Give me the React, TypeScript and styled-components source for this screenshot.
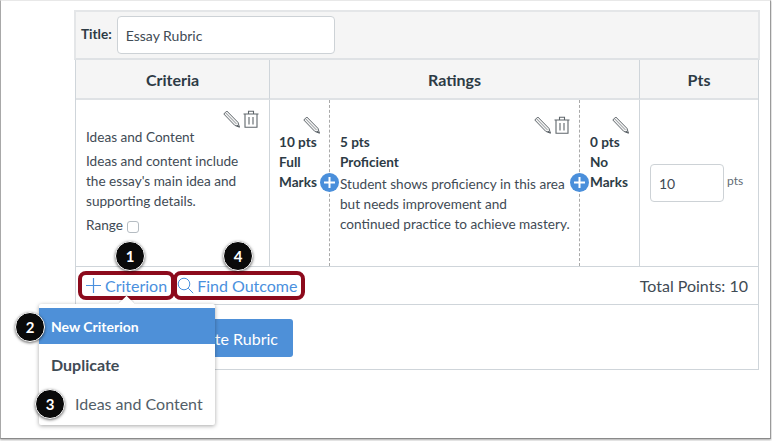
import React from "react";
import styled, { createGlobalStyle } from "styled-components";

const Global = createGlobalStyle`
  html, body { margin: 0; padding: 0; background: #fff; }
  body { font-family: Lato, "Open Sans", sans-serif; color: #2d3b45; width: 772px; height: 441px; overflow: hidden; }
`;

const Frame = styled.div`
  position: relative; box-sizing: border-box; width: 771px; height: 439px;
  border: 1px solid #d4d4d4; border-left-color: #a8a8a8; border-right-color: #9a9a9a; border-bottom: 1px solid #8a8a8a; border-top: 1px solid #e8e8e8;
  box-shadow: 0 1px 2px rgba(0,0,0,.35);
  padding: 9px 0 0 73px; background: #fff;
`;
const Rubric = styled.div`width: 686px;`;
const TitleRow = styled.div`
  box-sizing: border-box; width: 686px; height: 50px; display: flex; align-items: center; gap: 5px; padding-left: 5px;
  background: #f5f5f5; border: 2px solid #e4e6e8; border-bottom-color: #dfe2e5;
`;
const TitleLabel = styled.span`font-size: 13.6px; font-weight: 700; margin-top: -3px;`;
const TextBox = styled.div<{ $w: number; $h: number }>`
  box-sizing: border-box; width: ${p => p.$w}px; height: ${p => p.$h}px; display: flex; align-items: center; padding-left: 8px;
  background: #fff; border: 1px solid #cdd2d6; border-radius: 4px; font-size: 14px; color: #3f4b55;
`;
const Table = styled.div`
  box-sizing: border-box; width: 684px; margin-left: 1px;
  display: grid; grid-template-columns: 194px 370px 118px; border-left: 1px solid #cfd5da; border-right: 1px solid #cfd5da;
`;
const Head = styled.div<{ $last?: boolean }>`
  box-sizing: border-box; height: 40px; display: flex; align-items: center; justify-content: center;
  background: #f5f5f5; font-size: 16px; font-weight: 700; color: #2d3b45;
  border-bottom: 2px solid #dfe2e5; border-right: ${p => (p.$last ? "none" : "1px solid #cfd5da")};
`;
const CriterionCell = styled.div`
  box-sizing: border-box; height: 166px; position: relative; padding: 27px 10px 0 10px; border-right: 1px solid #cfd5da; font-size: 13.6px; line-height: 20px; color: #3f4b55;
`;
const CritTitle = styled.div`margin-bottom: 4px;`;
const RangeRow = styled.div`display: flex; align-items: center; gap: 4px; margin-top: 4px;`;
const CheckBox = styled.span`width: 10px; height: 10px; border: 1px solid #b5bcc2; border-radius: 3px; margin-top: 3px;`;
const Ratings = styled.div`
  height: 166px; box-sizing: border-box; display: grid; grid-template-columns: 60px 250px 60px; border-right: 1px solid #cfd5da;
`;
const Rating = styled.div<{ $dashed?: boolean; $pad: number }>`
  position: relative; box-sizing: border-box; padding: 32px 0 0 ${p => p.$pad}px; font-size: 13.6px; line-height: 20px;
  border-right: ${p => (p.$dashed ? "1px dashed #a9a9a9" : "none")};
`;
const Bold = styled.div`font-weight: 700; color: #2d3b45;`;
const Desc = styled.div`color: #3f4b55; white-space: nowrap; margin-top: 2px;`;
const Tools = styled.div<{ $top: number; $right: number }>`
  position: absolute; top: ${p => p.$top}px; right: ${p => p.$right}px; display: flex; gap: 3px;
`;
const AddDot = styled.span`
  position: absolute; top: 73px; right: -10px; z-index: 2; width: 19px; height: 19px; border-radius: 50%; background: #4a8fdb;
  display: flex; align-items: center; justify-content: center;
`;
const PtsCell = styled.div`
  box-sizing: border-box; height: 166px; display: flex; align-items: flex-start; gap: 3px; padding: 64px 0 0 10px; font-size: 12px; color: #5f6b75;
`;
const PtsLabel = styled.span`line-height: 34px;`;
const FooterRow = styled.div`
  box-sizing: border-box; width: 684px; height: 39px; margin-left: 1px; display: flex; align-items: center; justify-content: space-between; padding: 0 10px 0 9px;
  border: 1px solid #cfd5da; font-size: 16px;
`;
const Actions = styled.div`display: flex; align-items: center; gap: 10px;`;
const ActionLink = styled.span`display: flex; align-items: center; gap: 3px; color: #4a90de; font-size: 16px;`;
const Total = styled.span`color: #3f4b55; font-size: 16px;`;
const SubmitRow = styled.div`
  box-sizing: border-box; width: 684px; height: 65px; margin-left: 1px; padding: 14px 0 0 0; border: 1px solid #cfd5da; border-top: none;
`;
const CreateButton = styled.div`
  box-sizing: border-box; margin-left: 49px; width: 168px; height: 38px; background: #4e90d8; border-radius: 3px; color: #fff; font-size: 16px;
  display: flex; align-items: center; justify-content: flex-end; padding-right: 15px;
`;
const Highlight = styled.div<{ $x: number; $w: number }>`
  position: absolute; box-sizing: border-box; left: ${p => p.$x}px; top: 270px; width: ${p => p.$w}px; height: 29px;
  border: 4px solid #8c0a1c; border-radius: 8px;
`;
const Menu = styled.div`
  position: absolute; left: 38px; top: 303px; width: 176px; height: 121px; box-sizing: border-box; padding-top: 4px; z-index: 3;
  background: #fff; box-shadow: 0 1px 4px rgba(0,0,0,.35); border-radius: 2px;
  &::before {
    content: ""; position: absolute; left: 82px; top: -6px; width: 11px; height: 11px; background: #fff; transform: rotate(45deg);
    box-shadow: -1px -1px 1px rgba(0,0,0,.12);
  }
`;
const MenuActive = styled.div`
  position: relative; height: 36px; background: #4e90d8; color: #fff; font-size: 14px; font-weight: 700; display: flex; align-items: center; padding-left: 12px;
`;
const MenuHeader = styled.div`
  box-sizing: border-box; height: 42px; padding: 0 0 2px 12px; display: flex; align-items: center; font-size: 16px; font-weight: 700; color: #3f4b55;
`;
const MenuItem = styled.div`height: 34px; display: flex; align-items: center; padding-left: 36px; font-size: 16px; color: #525e68;`;
const Badge = styled.span<{ $x: number; $y: number }>`
  position: absolute; z-index: 4; left: ${p => p.$x - 15}px; top: ${p => p.$y - 15}px; box-sizing: border-box; width: 30px; height: 30px; border-radius: 50%;
  background: #0a0a0a; border: 1px solid #fff; box-shadow: 0 1px 3px rgba(0,0,0,.6);
  color: #fff; font-size: 15px; font-weight: 700; display: flex; align-items: center; justify-content: center;
`;

const Pencil = () => (
  <svg width="17" height="18" viewBox="0 0 17 18" fill="none" stroke="#5f666b" strokeWidth="1">
    <path d="M.8 4 3.8 1 15 12.4l1.4 4.6-4.6-1.6Z" fill="#f4f4f4" />
    <path d="M2.3 2.5 13.4 13.9" stroke="#8a9094" />
    <path d="m14.2 15.2 2.2 1.8-2.6-.9Z" fill="#444" />
  </svg>
);
const Trash = () => (
  <svg width="16" height="18" viewBox="0 0 16 18" fill="none" stroke="#5f666b" strokeWidth="1.1">
    <path d="M.5 4h15M5.5 4V1.2h5V4M2 4v13.2h12V4M6 7v7.5M10 7v7.5" />
  </svg>
);
const PlusWhite = () => (
  <svg width="13" height="13" viewBox="0 0 13 13" stroke="#fff" strokeWidth="2"><path d="M6.5 1v11M1 6.5h11" /></svg>
);
const PlusBlue = () => (
  <svg width="17" height="17" viewBox="0 0 17 17" stroke="#4a90de" strokeWidth="1.2"><path d="M8.5 1v15M1 8.5h15" /></svg>
);
const Search = () => (
  <svg width="17" height="17" viewBox="0 0 17 17" fill="none" stroke="#4a90de" strokeWidth="1"><circle cx="7" cy="7" r="5.8" /><path d="m11.2 11.2 5 5" /></svg>
);

export default function App() {
  return (
    <>
      <Global />
      <Frame>
        <Rubric>
          <TitleRow>
            <TitleLabel>Title:</TitleLabel>
            <TextBox $w={218} $h={38}>Essay Rubric</TextBox>
          </TitleRow>
          <Table>
            <Head>Criteria</Head>
            <Head>Ratings</Head>
            <Head $last>Pts</Head>
            <CriterionCell>
              <Tools $top={10} $right={10}><Pencil /><Trash /></Tools>
              <CritTitle>Ideas and Content</CritTitle>
              <div>Ideas and content include<br />the essay's main idea and<br />supporting details.</div>
              <RangeRow>Range <CheckBox /></RangeRow>
            </CriterionCell>
            <Ratings>
              <Rating $dashed $pad={9}>
                <Tools $top={16} $right={9}><Pencil /></Tools>
                <Bold>10 pts</Bold><Bold>Full</Bold><Bold>Marks</Bold>
                <AddDot><PlusWhite /></AddDot>
              </Rating>
              <Rating $dashed $pad={10}>
                <Tools $top={16} $right={9}><Pencil /><Trash /></Tools>
                <Bold>5 pts</Bold><Bold>Proficient</Bold>
                <Desc>Student shows proficiency in this area<br />but needs improvement and<br />continued practice to achieve mastery.</Desc>
                <AddDot><PlusWhite /></AddDot>
              </Rating>
              <Rating $pad={10}>
                <Tools $top={16} $right={11}><Pencil /></Tools>
                <Bold>0 pts</Bold><Bold>No</Bold><Bold>Marks</Bold>
              </Rating>
            </Ratings>
            <PtsCell>
              <TextBox $w={74} $h={38}>10</TextBox>
              <PtsLabel>pts</PtsLabel>
            </PtsCell>
          </Table>
          <FooterRow>
            <Actions>
              <ActionLink><PlusBlue />Criterion</ActionLink>
              <ActionLink><Search />Find Outcome</ActionLink>
            </Actions>
            <Total>Total Points: 10</Total>
          </FooterRow>
          <SubmitRow><CreateButton>Create Rubric</CreateButton></SubmitRow>
        </Rubric>
        <Highlight $x={77} $w={97} />
        <Highlight $x={172} $w={132} />
        <Menu>
          <MenuActive>New Criterion</MenuActive>
          <MenuHeader>Duplicate</MenuHeader>
          <MenuItem>Ideas and Content</MenuItem>
        </Menu>
        <Badge $x={129} $y={255}>1</Badge>
        <Badge $x={237} $y={255}>4</Badge>
        <Badge $x={29} $y={326}>2</Badge>
        <Badge $x={49} $y={403}>3</Badge>
      </Frame>
    </>
  );
}
